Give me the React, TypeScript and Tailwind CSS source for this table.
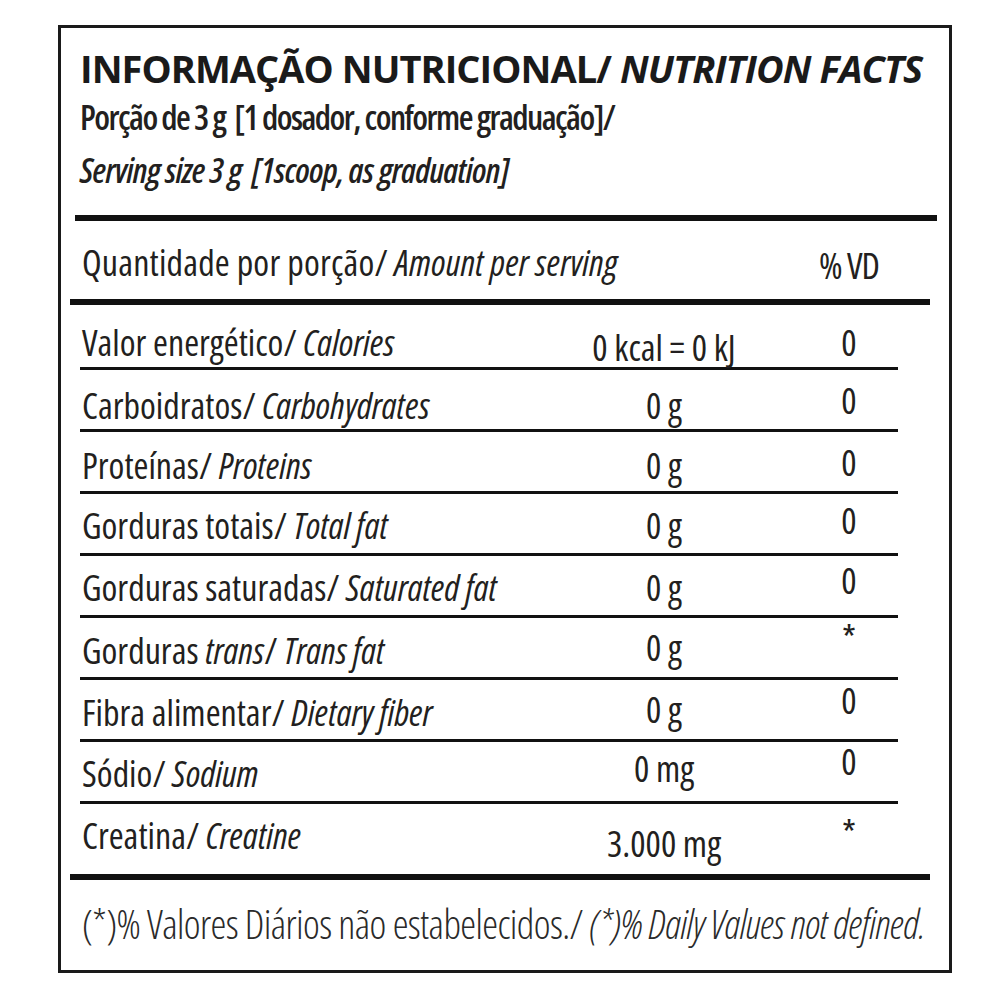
type Row = {
  label: React.ReactNode
  value: string
  vd: string
  h: string
  pl: string
  pv: string
  pd: string
  last?: boolean
}

const rows: Row[] = [
  { label: <>Valor energético/ <i>Calories</i></>, value: '0 kcal = 0 kJ', vd: '0', h: 'h-[65px]', pl: 'pb-[6px]', pv: 'pb-[1px]', pd: 'pb-[6px]' },
  { label: <>Carboidratos/ <i>Carbohydrates</i></>, value: '0 g', vd: '0', h: 'h-[62px]', pl: 'pb-[5px]', pv: 'pb-[5px]', pd: 'pb-[10px]' },
  { label: <>Proteínas/ <i>Proteins</i></>, value: '0 g', vd: '0', h: 'h-[62px]', pl: 'pb-[7px]', pv: 'pb-[7px]', pd: 'pb-[10px]' },
  { label: <>Gorduras totais/ <i>Total fat</i></>, value: '0 g', vd: '0', h: 'h-[62px]', pl: 'pb-[9px]', pv: 'pb-[9px]', pd: 'pb-[14px]' },
  { label: <>Gorduras saturadas/ <i>Saturated fat</i></>, value: '0 g', vd: '0', h: 'h-[62px]', pl: 'pb-[9px]', pv: 'pb-[9px]', pd: 'pb-[16px]' },
  { label: <>Gorduras <i>trans</i>/ <i>Trans fat</i></>, value: '0 g', vd: '*', h: 'h-[62px]', pl: 'pb-[8px]', pv: 'pb-[11px]', pd: 'pb-[21px]' },
  { label: <>Fibra alimentar/ <i>Dietary fiber</i></>, value: '0 g', vd: '0', h: 'h-[62px]', pl: 'pb-[8px]', pv: 'pb-[11px]', pd: 'pb-[20px]' },
  { label: <>Sódio/ <i>Sodium</i></>, value: '0 mg', vd: '0', h: 'h-[62px]', pl: 'pb-[9px]', pv: 'pb-[14px]', pd: 'pb-[21px]' },
  { label: <>Creatina/ <i>Creatine</i></>, value: '3.000 mg', vd: '*', h: 'h-[70px]', pl: 'pb-[20px]', pv: 'pb-[12px]', pd: 'pb-[23px]', last: true },
]

export default function App() {
  return (
    <div className="w-[1000px] h-[1000px] bg-white pt-[25px] pl-[58px] text-[#231f20] font-['Open_Sans',sans-serif] font-stretch-[75%]">
      <div className="w-[894px] h-[948px] border-[3px] border-[#1a1a1a] flex flex-col">
        <div className="pl-[19px]">
          <h1 className="mt-[21px] text-[38px] leading-none font-bold font-stretch-[100%] tracking-[-0.025em] text-[#1a1a1a] whitespace-nowrap">
            INFORMAÇÃO NUTRICIONAL/ <i>NUTRITION FACTS</i>
          </h1>
          <p className="mt-[13px] text-[34px] leading-none font-semibold tracking-[-0.045em] whitespace-nowrap">
            Porção de 3 g &nbsp;[1 dosador, conforme graduação]/
          </p>
          <p className="mt-[19px] text-[34px] leading-none font-semibold tracking-[-0.02em] italic whitespace-nowrap">
            Serving size 3 g &nbsp;[1scoop, as graduation]
          </p>
        </div>

        <div className="mt-[28px] ml-[14px] w-[862px] h-[6px] bg-[#111]" />

        <div className="ml-[19px] w-[818px] h-[78px] flex items-end text-[36px] leading-none font-medium">
          <div className="w-[504px] shrink-0 pl-[2px] pb-[18px] tracking-[0.005em] whitespace-nowrap">
            Quantidade por porção/ <i>Amount per serving</i>
          </div>
          <div className="w-[160px] shrink-0" />
          <div className="w-[98px] shrink-0 ml-[56px] text-center pb-[15px] tracking-[-0.03em]">% VD</div>
        </div>

        <div className="ml-[9px] w-[860px] h-[6px] bg-[#111]" />

        <div className="ml-[19px] w-[818px] text-[36px] leading-none font-medium">
          {rows.map((r, i) => (
            <div
              key={i}
              className={`flex items-end ${r.h} ${r.last ? '' : 'border-b-[3px] border-[#111]'}`}
            >
              <div className={`w-[504px] shrink-0 pl-[2px] whitespace-nowrap ${r.pl}`}>{r.label}</div>
              <div className={`w-[160px] shrink-0 text-center whitespace-nowrap ${r.pv}`}>{r.value}</div>
              <div className={`w-[98px] shrink-0 ml-[56px] text-center ${r.pd}`}>{r.vd}</div>
            </div>
          ))}
        </div>

        <div className="ml-[9px] w-[860px] h-[6px] bg-[#111]" />

        <p className="mt-[24px] pl-[21px] text-[40px] leading-none font-light tracking-[-0.015em] text-[#2a2a2a] whitespace-nowrap">
          (*)% Valores Diários não estabelecidos./ <i>(*)% Daily Values not defined.</i>
        </p>
      </div>
    </div>
  )
}
